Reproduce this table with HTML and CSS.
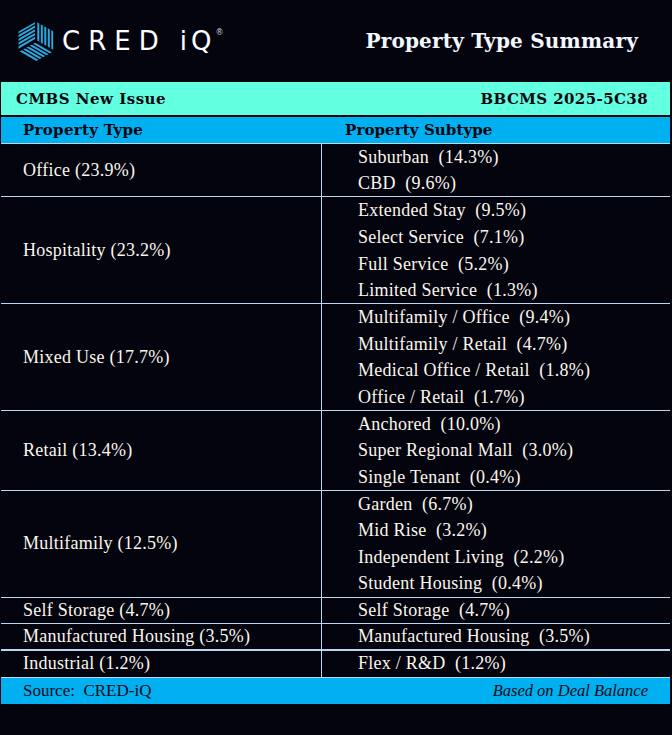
FILE: index.html
```html
<!DOCTYPE html>
<html lang="en">
<head>
<meta charset="utf-8">
<title>Property Type Summary</title>
<link rel="stylesheet" href="styles.css">
</head>
<body>
<div class="page">
  <header class="top">
    <div class="brand">
      <svg class="brand-mark" width="40" height="44" viewBox="14 18 40 44" aria-hidden="true">
        <defs>
          <clipPath id="fl"><polygon points="17.5,30.6 34,21.2 34,39.4 17.5,48.9"/></clipPath>
          <clipPath id="fr"><polygon points="36,21.2 52.5,30.6 52.5,48.9 36,39.4"/></clipPath>
          <clipPath id="fb"><polygon points="35,41.3 51.6,50.7 35,60.2 18.4,50.7"/></clipPath>
        </defs>
        <g stroke="#2aa9e0" stroke-width="2" fill="none">
          <g clip-path="url(#fl)">
            <path d="M12 34.4L40 18.3M12 38.2L40 22.1M12 42L40 25.9M12 45.8L40 29.7M12 49.6L40 33.5"/>
          </g>
          <g clip-path="url(#fr)">
            <path d="M37.3 15V62M40.8 15V62M44.3 15V62M47.8 15V62M51.3 15V62"/>
          </g>
          <g clip-path="url(#fb)">
            <path d="M12 30.1L58 56.6M12 33.9L58 60.4M12 37.7L58 64.2M12 41.5L58 68M12 45.3L58 71.8"/>
          </g>
        </g>
      </svg>
      <div class="brand-name">
        <span class="brand-cred">CRED</span>
        <span class="brand-iq">iQ</span>
        <span class="reg">®</span>
      </div>
    </div>
    <h1 class="title">Property Type Summary</h1>
  </header>

  <section class="sheet">
    <div class="band-issue">
      <span class="issue">CMBS New Issue</span>
      <span class="deal">BBCMS 2025-5C38</span>
    </div>
    <div class="band-head">
      <span class="head-type">Property Type</span>
      <span class="head-sub">Property Subtype</span>
    </div>

    <div class="group">
      <div class="type">Office (23.9%)</div>
      <div class="subs">
        <div class="sub">Suburban  (14.3%)</div>
        <div class="sub">CBD  (9.6%)</div>
      </div>
    </div>
    <div class="group">
      <div class="type">Hospitality (23.2%)</div>
      <div class="subs">
        <div class="sub">Extended Stay  (9.5%)</div>
        <div class="sub">Select Service  (7.1%)</div>
        <div class="sub">Full Service  (5.2%)</div>
        <div class="sub">Limited Service  (1.3%)</div>
      </div>
    </div>
    <div class="group">
      <div class="type">Mixed Use (17.7%)</div>
      <div class="subs">
        <div class="sub">Multifamily / Office  (9.4%)</div>
        <div class="sub">Multifamily / Retail  (4.7%)</div>
        <div class="sub">Medical Office / Retail  (1.8%)</div>
        <div class="sub">Office / Retail  (1.7%)</div>
      </div>
    </div>
    <div class="group">
      <div class="type">Retail (13.4%)</div>
      <div class="subs">
        <div class="sub">Anchored  (10.0%)</div>
        <div class="sub">Super Regional Mall  (3.0%)</div>
        <div class="sub">Single Tenant  (0.4%)</div>
      </div>
    </div>
    <div class="group">
      <div class="type">Multifamily (12.5%)</div>
      <div class="subs">
        <div class="sub">Garden  (6.7%)</div>
        <div class="sub">Mid Rise  (3.2%)</div>
        <div class="sub">Independent Living  (2.2%)</div>
        <div class="sub">Student Housing  (0.4%)</div>
      </div>
    </div>
    <div class="group">
      <div class="type">Self Storage (4.7%)</div>
      <div class="subs">
        <div class="sub">Self Storage  (4.7%)</div>
      </div>
    </div>
    <div class="group group-thick">
      <div class="type">Manufactured Housing (3.5%)</div>
      <div class="subs">
        <div class="sub">Manufactured Housing  (3.5%)</div>
      </div>
    </div>
    <div class="group">
      <div class="type">Industrial (1.2%)</div>
      <div class="subs">
        <div class="sub">Flex / R&amp;D  (1.2%)</div>
      </div>
    </div>

    <footer class="foot">
      <span class="source">Source:  CRED-iQ</span>
      <span class="basis">Based on Deal Balance</span>
    </footer>
  </section>
</div>
</body>
</html>
```

FILE: styles.css
```css
* {
  box-sizing: border-box;
  margin: 0;
  padding: 0;
}

html,
body {
  background: #04040f;
}

body {
  width: 672px;
  height: 735px;
  overflow: hidden;
  font-family: "Liberation Serif", serif;
  font-size: 18px;
  letter-spacing: 0.25px;
  color: #fbf6ec;
}

.page {
  width: 672px;
  height: 735px;
}

.top {
  height: 82px;
  display: flex;
  align-items: center;
  justify-content: space-between;
  padding: 0 34px 0 15px;
}

.brand {
  display: flex;
  align-items: center;
  gap: 7px;
}

.brand-mark {
  display: block;
}

.brand-name {
  display: flex;
  align-items: flex-start;
  font-family: "DejaVu Sans", sans-serif;
  font-size: 26px;
  font-weight: 400;
  line-height: 1;
  color: #ffffff;
  letter-spacing: 0;
}

.brand-cred {
  letter-spacing: 8px;
}

.brand-iq {
  margin-left: 13px;
  letter-spacing: 4px;
}

.reg {
  font-size: 8px;
  color: #c9ccd6;
  margin-left: 0;
  margin-top: 1px;
}

.title {
  font-family: "DejaVu Serif", serif;
  font-size: 20px;
  font-weight: bold;
  letter-spacing: 0.2px;
  color: #f3f8ff;
}

.sheet {
  margin: 0 2px 0 1px;
}

.band-issue,
.band-head {
  font-family: "DejaVu Serif", serif;
  font-size: 15px;
  font-weight: bold;
  color: #05050f;
}

.band-issue {
  height: 33px;
  background: #62ffe0;
  display: flex;
  align-items: center;
  justify-content: space-between;
  padding: 0 22px 0 15px;
}

.issue {
  letter-spacing: 0.5px;
}

.deal {
  letter-spacing: 0.4px;
}

.band-head {
  margin-top: 2px;
  height: 27px;
  background: #00b0f0;
  border-bottom: 1px solid #bdd7ee;
  display: grid;
  grid-template-columns: 321px 1fr;
  align-items: center;
  letter-spacing: 0.1px;
}

.head-type {
  padding-left: 22px;
  letter-spacing: 0.3px;
}

.head-sub {
  padding-left: 23px;
}

.group {
  display: grid;
  grid-template-columns: 321px 1fr;
  border-bottom: 1px solid #bdd7ee;
}

.group-thick {
  border-bottom-width: 2px;
}

.type {
  display: flex;
  align-items: center;
  padding-left: 22px;
  border-right: 1px solid #bdd7ee;
  white-space: pre;
}

.subs {
  display: flex;
  flex-direction: column;
}

.sub {
  height: 26.7px;
  display: flex;
  align-items: center;
  padding-left: 36px;
  white-space: pre;
}

.sub:last-child {
  height: 25.7px;
}

.group-thick .sub:last-child {
  height: 24.7px;
}

.foot {
  height: 26px;
  background: #00b0f0;
  display: flex;
  align-items: center;
  justify-content: space-between;
  padding: 0 22px;
  font-size: 17px;
  letter-spacing: 0;
  color: #0a0a14;
}

.source {
  white-space: pre;
}

.basis {
  font-style: italic;
  font-size: 16.5px;
}
```
